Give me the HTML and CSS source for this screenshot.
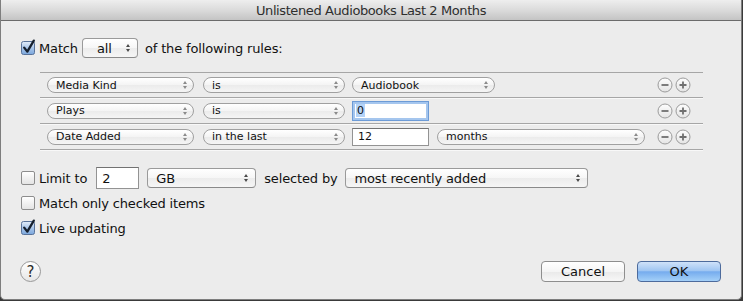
FILE: index.html
```html
<!DOCTYPE html>
<html>
<head>
<meta charset="utf-8">
<link rel="stylesheet" href="styles.css">
</head>
<body>
<div class="window">
  <div class="titlebar">Unlistened Audiobooks Last 2 Months</div>
  <div class="content">
    <div class="row match-row">
      <span class="cb checked"><svg width="17" height="17" viewBox="0 0 17 17"><defs><linearGradient id="g1" x1="0" y1="0" x2="0" y2="1"><stop offset="0" stop-color="#e3edf9"/><stop offset="0.5" stop-color="#a9c6ea"/><stop offset="1" stop-color="#7aa6dc"/></linearGradient></defs><rect x="0.5" y="2.5" width="13" height="13" rx="2" fill="url(#g1)" stroke="#58729a"/><path d="M3.2 8.6 L6.3 12.6 L12.8 1.6" fill="none" stroke="#16202e" stroke-width="2.3" stroke-linecap="round" stroke-linejoin="round"/></svg></span>
      <span class="label">Match</span>
      <span class="popup all"><span class="ptext">all</span><span class="arr dark"></span></span>
      <span class="label after">of the following rules:</span>
    </div>

    <div class="rules">
      <div class="rule first">
        <span class="pill w-field"><span>Media Kind</span><span class="arr"></span></span>
        <span class="pill w-op"><span>is</span><span class="arr"></span></span>
        <span class="pill w-val"><span>Audiobook</span><span class="arr"></span></span>
        <span class="pm"><svg class="circ" width="16" height="16" viewBox="0 0 16 16"><defs><linearGradient id="cg1" x1="0" y1="0" x2="0" y2="1"><stop offset="0" stop-color="#fdfdfd"/><stop offset="1" stop-color="#e4e4e4"/></linearGradient></defs><circle cx="8" cy="8" r="7" fill="url(#cg1)" stroke="#9b9b9b"/><path d="M4.5 8 H11.5" stroke="#6f6f6f" stroke-width="1.8"/></svg><svg class="circ" width="16" height="16" viewBox="0 0 16 16"><circle cx="8" cy="8" r="7" fill="url(#cg1)" stroke="#9b9b9b"/><path d="M4.5 8 H11.5 M8 4.5 V11.5" stroke="#6f6f6f" stroke-width="1.8"/></svg></span>
      </div>
      <div class="rule">
        <span class="pill w-field"><span>Plays</span><span class="arr"></span></span>
        <span class="pill w-op"><span>is</span><span class="arr"></span></span>
        <span class="tf focus"><span class="sel">0</span></span>
        <span class="pm"><svg class="circ" width="16" height="16" viewBox="0 0 16 16"><circle cx="8" cy="8" r="7" fill="url(#cg1)" stroke="#9b9b9b"/><path d="M4.5 8 H11.5" stroke="#6f6f6f" stroke-width="1.8"/></svg><svg class="circ" width="16" height="16" viewBox="0 0 16 16"><circle cx="8" cy="8" r="7" fill="url(#cg1)" stroke="#9b9b9b"/><path d="M4.5 8 H11.5 M8 4.5 V11.5" stroke="#6f6f6f" stroke-width="1.8"/></svg></span>
      </div>
      <div class="rule">
        <span class="pill w-field"><span>Date Added</span><span class="arr"></span></span>
        <span class="pill w-op"><span>in the last</span><span class="arr"></span></span>
        <span class="tf">12</span>
        <span class="pill w-unit"><span>months</span><span class="arr"></span></span>
        <span class="pm"><svg class="circ" width="16" height="16" viewBox="0 0 16 16"><circle cx="8" cy="8" r="7" fill="url(#cg1)" stroke="#9b9b9b"/><path d="M4.5 8 H11.5" stroke="#6f6f6f" stroke-width="1.8"/></svg><svg class="circ" width="16" height="16" viewBox="0 0 16 16"><circle cx="8" cy="8" r="7" fill="url(#cg1)" stroke="#9b9b9b"/><path d="M4.5 8 H11.5 M8 4.5 V11.5" stroke="#6f6f6f" stroke-width="1.8"/></svg></span>
      </div>
    </div>

    <div class="row limit-row">
      <span class="cb"></span>
      <span class="label">Limit to</span>
      <span class="tf big">2</span>
      <span class="popup gb"><span class="ptext">GB</span><span class="arr dark"></span></span>
      <span class="label sel-by">selected by</span>
      <span class="popup recent"><span class="ptext">most recently added</span><span class="arr dark"></span></span>
    </div>
    <div class="row check-row">
      <span class="cb"></span>
      <span class="label">Match only checked items</span>
    </div>
    <div class="row check-row live">
      <span class="cb checked"><svg width="17" height="17" viewBox="0 0 17 17"><defs><linearGradient id="g2" x1="0" y1="0" x2="0" y2="1"><stop offset="0" stop-color="#e3edf9"/><stop offset="0.5" stop-color="#a9c6ea"/><stop offset="1" stop-color="#7aa6dc"/></linearGradient></defs><rect x="0.5" y="2.5" width="13" height="13" rx="2" fill="url(#g2)" stroke="#58729a"/><path d="M3.2 8.6 L6.3 12.6 L12.8 1.6" fill="none" stroke="#16202e" stroke-width="2.3" stroke-linecap="round" stroke-linejoin="round"/></svg></span>
      <span class="label">Live updating</span>
    </div>

    <div class="row footer">
      <span class="help">?</span>
      <button class="btn cancel">Cancel</button>
      <button class="btn ok">OK</button>
    </div>
  </div>
</div>
</body>
</html>
```

FILE: styles.css
```css
body {
  margin: 0;
  background: #3a3a3a;
  font-family: "DejaVu Sans", sans-serif;
}

.window {
  width: 742px;
  height: 300px;
  box-sizing: border-box;
  background: #ececec;
  border: 1px solid #7e7e7e;
  border-top: none;
  border-radius: 0 0 5px 5px;
  display: flex;
  flex-direction: column;
  overflow: hidden;
}

.titlebar {
  flex: none;
  height: 20px;
  border-bottom: 1px solid #6b6b6b;
  background: linear-gradient(#eeeeee, #d9d9d9 55%, #c4c4c4);
  text-align: center;
  font-size: 13px;
  line-height: 21px;
  color: #2e2e2e;
  letter-spacing: -0.4px;
}

.content {
  flex: 1;
  display: flex;
  flex-direction: column;
  padding: 17px 20px 0 20px;
  font-size: 13px;
  color: #111;
  letter-spacing: -0.15px;
}

.row {
  display: flex;
  align-items: center;
}

.match-row {
  height: 20px;
}

.cb {
  flex: none;
  width: 14px;
  height: 14px;
  box-sizing: border-box;
  border: 1px solid #8d8d8d;
  border-radius: 2px;
  background: linear-gradient(#ffffff, #f1f1f1 50%, #e4e4e4);
  margin-right: 4px;
  position: relative;
}

.cb.checked {
  border: none;
  background: none;
}

.cb.checked svg {
  position: absolute;
  left: 0;
  top: -2px;
  overflow: visible;
}

.label {
  white-space: nowrap;
}

.popup {
  flex: none;
  height: 20px;
  box-sizing: border-box;
  border: 1px solid #9a9a9a;
  border-bottom-color: #8a8a8a;
  border-radius: 4px;
  background: linear-gradient(#ffffff, #f6f6f6 50%, #ececec 51%, #f6f6f6);
  display: flex;
  align-items: center;
  justify-content: space-between;
  padding: 0 7px 0 8px;
  font-size: 13px;
}

.popup.all {
  width: 56px;
  margin-left: 4px;
  padding-left: 14px;
}

.label.after {
  margin-left: 7px;
}

.arr {
  display: flex;
  flex-direction: column;
  gap: 2px;
  align-items: center;
}

.arr::before,
.arr::after {
  content: "";
  width: 0;
  height: 0;
  border-left: 2.5px solid transparent;
  border-right: 2.5px solid transparent;
}

.arr::before {
  border-bottom: 3px solid #8a8a8a;
}

.arr::after {
  border-top: 3px solid #8a8a8a;
}

.arr.dark::before {
  border-bottom-color: #4a4a4a;
}

.arr.dark::after {
  border-top-color: #4a4a4a;
}

.rules {
  margin: 14px 0 0 19px;
  width: 663px;
  border-bottom: 1px solid #a6a6a6;
  box-shadow: 0 1px 0 #f8f8f8;
  letter-spacing: 0;
}

.rule {
  display: flex;
  align-items: center;
  height: 25px;
  border-top: 1px solid #a6a6a6;
  padding-left: 7px;
}

.rule.first {
  height: 24px;
}

.rule + .rule {
  box-shadow: inset 0 1px 0 #f8f8f8;
}

.pill {
  flex: none;
  height: 16px;
  box-sizing: border-box;
  border: 1px solid #a0a0a0;
  border-radius: 8px;
  background: linear-gradient(#ffffff, #f4f4f4 50%, #ebebeb 51%, #f5f5f5);
  display: flex;
  align-items: center;
  justify-content: space-between;
  padding: 0 6px 0 8px;
  font-size: 11px;
  color: #111;
}

.w-field { width: 147px; }
.w-op { width: 142px; margin-left: 9px; }
.w-val { width: 143px; margin-left: 7px; }
.w-unit { width: 208px; margin-left: 8px; }

.tf {
  flex: none;
  width: 77px;
  height: 18px;
  box-sizing: border-box;
  border: 1px solid #939393;
  border-top-color: #727272;
  background: #fff;
  font-size: 11px;
  padding-left: 5px;
  display: flex;
  align-items: center;
  margin-left: 7px;
}

.tf.focus {
  height: 20px;
  border: 1px solid #6d9bd6;
  box-shadow: inset 0 0 0 2px #a5c6ee;
  padding-left: 3px;
}

.sel {
  background: #b4d3f8;
  padding: 0 1px;
}

.pm {
  margin-left: auto;
  margin-right: 12px;
  display: flex;
  gap: 2px;
}

.circ {
  display: block;
  flex: none;
}

.limit-row {
  margin-top: 17px;
  height: 22px;
}

.tf.big {
  width: 43px;
  height: 22px;
  font-size: 13px;
  margin-left: 9px;
  padding-left: 5px;
}

.popup.gb {
  width: 109px;
  margin-left: 8px;
}

.label.sel-by {
  margin-left: 8px;
}

.popup.recent {
  width: 243px;
  margin-left: 7px;
  padding-left: 9px;
}

.check-row {
  margin-top: 5px;
  height: 18px;
}

.check-row.live {
  margin-top: 7px;
}

.footer {
  margin-top: 24px;
  height: 21px;
}

.help {
  flex: none;
  width: 21px;
  height: 21px;
  box-sizing: border-box;
  margin-left: -1px;
  border: 1px solid #989898;
  border-radius: 50%;
  background: linear-gradient(#ffffff, #e6e6e6);
  display: flex;
  align-items: center;
  justify-content: center;
  font-size: 15px;
  color: #2a2a2a;
  letter-spacing: 0;
}

.btn {
  flex: none;
  width: 84px;
  height: 21px;
  box-sizing: border-box;
  border: 1px solid #8e8e8e;
  border-radius: 4px;
  background: linear-gradient(#ffffff, #f5f5f5 50%, #e9e9e9 51%, #f7f7f7);
  font-family: "DejaVu Sans", sans-serif;
  font-size: 13px;
  color: #111;
  padding: 0;
}

.btn.cancel {
  margin-left: auto;
}

.btn.ok {
  margin-left: 12px;
  border-color: #4d6b9c;
  background: linear-gradient(#cfe2f9, #a0c6f2 45%, #76acee 52%, #a4d0f8);
}
```
